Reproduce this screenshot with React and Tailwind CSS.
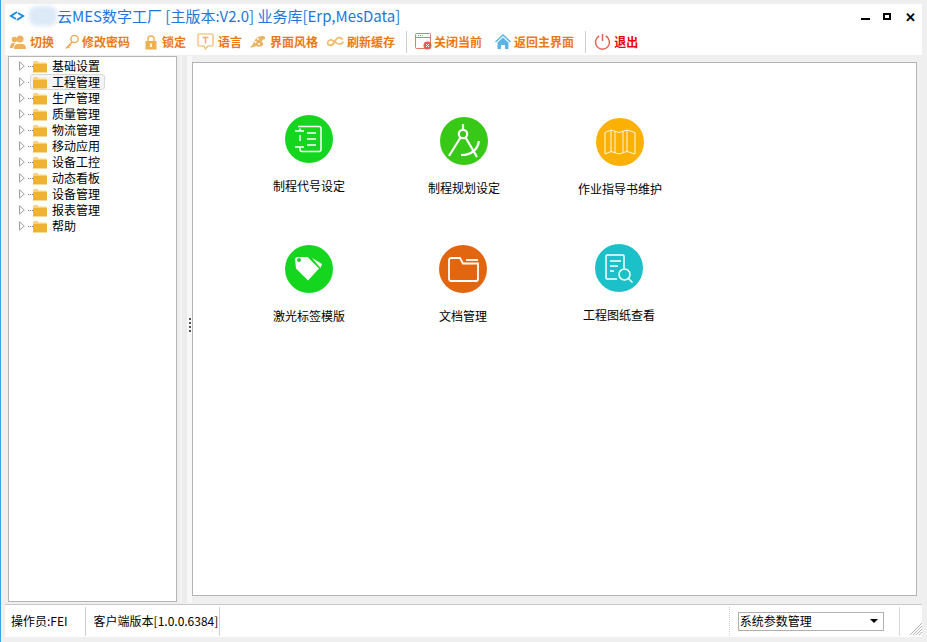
import { ChevronDown } from "lucide-react";

const CJK = "font-['Noto_Sans_CJK_SC','Liberation_Sans',sans-serif]";

const treeItems = ["基础设置", "工程管理", "生产管理", "质量管理", "物流管理", "移动应用", "设备工控", "动态看板", "设备管理", "报表管理", "帮助"];

function UserIcon() {
  return (
    <svg width="16" height="16" viewBox="0 0 16 16" fill="#f0b060">
      <circle cx="10" cy="5" r="3.5" />
      <path d="M4 15c0-4 2-5 4-5h4c2 0 4 1 4 5z" />
      <circle cx="4.5" cy="5.5" r="2.8" />
      <path d="M0 14c0-3 1-5 3-5h2l-2 5z" />
    </svg>
  );
}

function KeyIcon() {
  return (
    <svg width="16" height="16" viewBox="0 0 16 16" fill="none" stroke="#f0a850" strokeWidth="1.4">
      <circle cx="10.5" cy="5" r="3.6" />
      <path d="M8 8 2 14.5M3.5 12.5l2 1.5M5.5 10.5l1.5 1.5" />
    </svg>
  );
}

function LockIcon() {
  return (
    <svg width="14" height="16" viewBox="0 0 14 16">
      <path d="M4 8V5a3 3 0 0 1 6 0v3" fill="none" stroke="#f0b060" strokeWidth="1.5" />
      <rect x="1.5" y="7" width="11" height="8.5" fill="#f0b050" />
      <rect x="6" y="9.5" width="2" height="3.5" fill="#fff" />
    </svg>
  );
}

function LangIcon() {
  return (
    <svg width="17" height="17" viewBox="0 0 17 17" fill="none" stroke="#f0b060" strokeWidth="1.1">
      <path d="M2 1h13a1 1 0 0 1 1 1v10a1 1 0 0 1-1 1h-4l-2.5 3L7 13H2a1 1 0 0 1-1-1V2a1 1 0 0 1 1-1z" />
      <path d="M5.5 4.500h6M8.500 4.500v6" strokeWidth="1.500" />
    </svg>
  );
}

function SkinIcon() {
  return (
    <svg width="17" height="16" viewBox="0 0 17 16" fill="#e8b468">
      <path d="M1 13c2-1 3-3 4-5 1-3 4-6 8-6 2 0 4 1 3 3-1 1-3 0-3 2s2 2 1 4c-1 2-5 2-7 1-2 1-4 2-6 1z" />
      <circle cx="9" cy="5" r="1" fill="#fff" />
      <circle cx="6.500" cy="8" r="1" fill="#fff" />
      <circle cx="10" cy="10" r="1" fill="#fff" />
    </svg>
  );
}

function RefreshIcon() {
  return (
    <svg width="17" height="12" viewBox="0 0 17 12" fill="none" stroke="#eebb70" strokeWidth="1.700">
      <path d="M16 3.500C13 .5 10 1 8 5c-1.500 3-4 5-6 4S0 5 3 4c3-1 6 4 9 4 2 0 4-1 4-2.500" />
    </svg>
  );
}

function CloseTabIcon() {
  return (
    <svg width="17" height="17" viewBox="0 0 17 17">
      <rect x=".5" y=".5" width="15" height="15" rx="1" fill="#fff" stroke="#de7a66" />
      <path d="M1 1h14v3H1z" fill="#fff" />
      <path d="M1 4.500h14" stroke="#de7a66" />
      <path d="M3 2.500h1M5 2.500h1M7 2.500h1" stroke="#de7a66" />
      <circle cx="12.500" cy="12.500" r="4" fill="#e2604c" />
      <path d="m11 11 3 3m0-3-3 3" stroke="#fff" />
    </svg>
  );
}

function HomeIcon() {
  return (
    <svg width="16" height="15" viewBox="0 0 16 15" fill="#5cb3e6">
      <path d="M8 0 0 7.500l1 1L8 2l7 6.500 1-1z" />
      <path d="M2.500 8.500 8 3.500l5.500 5V15H10v-4H6v4H2.500z" />
    </svg>
  );
}

function PowerIcon() {
  return (
    <svg width="17" height="17" viewBox="0 0 17 17" fill="none" stroke="#df6350" strokeWidth="1.500">
      <path d="M5.200 3a7 7 0 1 0 6.600 0" />
      <path d="M8.500 1v7" />
    </svg>
  );
}

function Folder() {
  return (
    <svg width="14" height="13" viewBox="0 0 14 13" className="shrink-0">
      <path d="M0 2.500 1 1h3.500l1 1.500H13l1 1V5H0z" fill="#f7d17d" />
      <path d="M0 4h14v8.500H0z" fill="#f0b232" />
    </svg>
  );
}

function Triangle() {
  return (
    <svg width="6" height="10" viewBox="0 0 6 10" className="shrink-0">
      <path d="M.5.800 5.300 5 .5 9.200z" fill="#fff" stroke="#a0a0a0" />
    </svg>
  );
}

const toolbar = [
  { icon: <UserIcon />, label: "切换", cls: "ml-[1px] mr-[10px]" },
  { icon: <KeyIcon />, label: "修改密码", cls: "mr-[14px]", gap: "gap-[2px]" },
  { icon: <LockIcon />, label: "锁定", cls: "mr-[11px]" },
  { icon: <LangIcon />, label: "语言", cls: "mr-[7px]" },
  { icon: <SkinIcon />, label: "界面风格", cls: "mr-[9px]" },
  { icon: <RefreshIcon />, label: "刷新缓存", cls: "", gap: "gap-[3px]" },
];

const modules = [
  { label: "制程代号设定", color: "bg-[#14d61e]", icon: "note", cls: "mt-[52px] ml-[66px]" },
  { label: "制程规划设定", color: "bg-[#38c818]", icon: "compass", cls: "mt-[54px] ml-[66px]" },
  { label: "作业指导书维护", color: "bg-[#fab104]", icon: "map", cls: "mt-[55px] ml-[65px]" },
  { label: "激光标签模版", color: "bg-[#14d61e]", icon: "tag", cls: "mt-[47px] ml-[66px]" },
  { label: "文档管理", color: "bg-[#e2650f]", icon: "folder", cls: "mt-[47px] ml-[65px]" },
  { label: "工程图纸查看", color: "bg-[#1cc0c8]", icon: "search", cls: "mt-[46px] ml-[64px]" },
];

function ModuleGlyph({ name }) {
  const s = { fill: "none", stroke: "#fff", strokeWidth: 1.5 };
  if (name === "note") {
    return (
      <svg width="30" height="30" viewBox="0 0 30 30" {...s}>
        <path d="M4 3.500h21a2 2 0 0 1 2 2v21a2 2 0 0 1-2 2H8a2 2 0 0 1-2-2V24M6 18v-6M6 8V5.500M1 8h9M1 24h9M13 10h9M13 16h9M13 22h9" transform="translate(0 -1)" />
      </svg>
    );
  }
  if (name === "compass") {
    return (
      <svg width="34" height="36" viewBox="0 0 34 36" {...s} strokeWidth="2.200">
        <circle cx="16" cy="11" r="4.200" />
        <path d="M16 1v6M13.500 14.500 2 33M18.500 14.500 30 34" />
        <path d="M14 32c8 0 16-3 18-14" />
      </svg>
    );
  }
  if (name === "map") {
    return (
      <svg width="32" height="26" viewBox="0 0 32 26" {...s} strokeWidth="0.900">
        <path d="M1 3.500 7 1l8 2.500L23 1l8 2.500V25l-8-2.500L15 25l-8-2.500L1 25z" />
        <path d="M7 1v21.500M11 2.200v21.500M19 2.200v21.500M23 1v21.500" />
      </svg>
    );
  }
  if (name === "tag") {
    return (
      <svg width="28" height="28" viewBox="0 0 28 28">
        <path d="M0 2.500 2 1h10.500L24 12.500 13 24.500 1 12.500z" fill="#fff" transform="translate(0 1)" />
        <circle cx="4" cy="5" r="2" fill="#14d61e" />
        <path d="m17 3 10 6-1.500 4z" fill="#fff" />
      </svg>
    );
  }
  if (name === "folder") {
    return (
      <svg width="31" height="25" viewBox="0 0 31 25" {...s} strokeWidth="1.800">
        <path d="M1 3a2 2 0 0 1 2-2h9l3 5.500h15V22a2 2 0 0 1-2 2H3a2 2 0 0 1-2-2z" />
        <path d="M18 3h12" />
      </svg>
    );
  }
  return (
    <svg width="28" height="29" viewBox="0 0 28 29" {...s}>
      <path d="M19 14V2a1 1 0 0 0-1-1H2a1 1 0 0 0-1 1v22a1 1 0 0 0 1 1h10" />
      <path d="M5 7h11M5 12h8M5 17h4" />
      <circle cx="19.500" cy="20.500" r="5.500" />
      <path d="m23.500 24.500 4 4" />
    </svg>
  );
}

function Module({ item }) {
  return (
    <div className={`${item.cls} flex w-[100px] flex-col items-center`}>
      <div className={`${item.color} flex h-12 w-12 items-center justify-center rounded-full`}>
        <ModuleGlyph name={item.icon} />
      </div>
      <div className="mt-[14px] text-center text-[12px] leading-[18px] whitespace-nowrap text-black">{item.label}</div>
    </div>
  );
}

export default function App() {
  return (
    <div className={`${CJK} flex h-[642px] w-[927px] flex-col overflow-hidden border-l border-[#35a4e8] bg-[#efefef] pt-[4px] pr-[5px] pl-[4px] text-black`}>
      {/* title bar */}
      <div className="flex h-[24px] shrink-0 items-center bg-white">
        <svg width="16" height="14" viewBox="0 0 16 14" fill="none" strokeWidth="2" className="ml-[4px] shrink-0">
          <path d="M8 3 2 7l5 3" stroke="#1a8fe0" />
          <path d="M8 11l6-4-5-3" stroke="#1a8fe0" />
        </svg>
        <div className="ml-[4px] h-[20px] w-[28px] shrink-0 rounded-[8px] bg-[#dce9f7] blur-[2px]" />
        <div className="text-[15px] leading-[22px] whitespace-nowrap text-[#1a78de]">云MES数字工厂 [主版本:V2.0] 业务库[Erp,MesData]</div>
        <div className="ml-auto flex items-center">
          <div className="mt-[5px] h-[2px] w-[9px] bg-black" />
          <div className="ml-[13px] h-[7px] w-[8px] border-2 border-black" />
          <div className="mr-[6px] ml-[14px] text-[13px] leading-none font-bold text-black">✕</div>
        </div>
      </div>

      {/* toolbar */}
      <div className="flex h-[27px] shrink-0 items-center bg-white pl-[4px] text-[12px] font-bold text-[#ec7a10]">
        {toolbar.map((t) => (
          <div key={t.label} className={`flex items-center ${t.gap || "gap-[4px]"} ${t.cls}`}>
            {t.icon}
            <span className="whitespace-nowrap">{t.label}</span>
          </div>
        ))}
        <div className="mx-[8px] ml-[11px] h-[22px] w-px bg-[#cfcfcf]" />
        <div className="flex items-center gap-[2px]">
          <CloseTabIcon />
          <span>关闭当前</span>
        </div>
        <div className="ml-[13px] flex items-center gap-[3px]">
          <HomeIcon />
          <span>返回主界面</span>
        </div>
        <div className="mx-[8px] ml-[11px] h-[22px] w-px bg-[#cfcfcf]" />
        <div className="flex items-center gap-[3px] text-[#f00000]">
          <PowerIcon />
          <span>退出</span>
        </div>
      </div>

      {/* main */}
      <div className="flex min-h-0 flex-1 bg-[#efefef] pt-px">
        <div className="ml-[3px] h-[546px] w-[169px] shrink-0 border border-[#b4b4b4] bg-white pt-px">
          {treeItems.map((name, i) => (
            <div key={name} className="relative flex h-4 items-center pl-[10px]">
              {i === 1 && <div className="absolute top-0 left-[21px] h-4 w-[75px] rounded-[3px] border border-[#d8d8d8] bg-[#f4f4f4]" />}
              <Triangle />
              <div className="ml-[3px] w-[5px] shrink-0 border-t border-dotted border-[#808080]" />
              <div className="relative flex items-center">
                <Folder />
                <span className="ml-[5px] text-[12px] leading-4 text-black">{name}</span>
              </div>
            </div>
          ))}
        </div>
        <div className="relative w-[5px] shrink-0">
          <div className="absolute top-0 left-[3px] h-[547px] w-[2px] bg-[#f4f4f4]" />
        </div>
        <div className="flex h-[547px] w-[5px] shrink-0 flex-col items-center justify-center gap-[2px] bg-[#ececec]" />
        <div className="relative flex h-[547px] w-[5px] shrink-0 flex-col items-center justify-center gap-[2px] bg-[#f8f8f8] pb-[10px]">
          <div className="h-[2px] w-[2px] bg-[#555]" />
          <div className="h-[2px] w-[2px] bg-[#555]" />
          <div className="h-[2px] w-[2px] bg-[#555]" />
          <div className="h-[2px] w-[2px] bg-[#555]" />
        </div>
        <div className="h-[547px] flex-1 bg-[#efefef] pt-[6px] pr-[5px] pb-[7px]">
          <div className="grid h-full grid-cols-[155px_157px_1fr] content-start border border-[#b4b4b4] bg-white">
            {modules.map((m) => (
              <Module key={m.label} item={m} />
            ))}
          </div>
        </div>
      </div>

      {/* status bar */}
      <div className="mb-[5px] flex h-[33px] shrink-0 items-center border-t border-[#c8c8c8] bg-white text-[12px] leading-4">
        <div className="flex h-[29px] w-[81px] items-center border-r border-[#d0d0d0] pl-[6px] whitespace-nowrap">操作员:FEI</div>
        <div className="flex h-[29px] w-[135px] items-center border-r border-[#d0d0d0] pl-[8px] whitespace-nowrap">客户端版本[1.0.0.6384]</div>
        <div className="ml-[509px] h-[29px] w-0 border-l border-dotted border-[#d0d0d0]" />
        <div className="ml-[8px] flex h-[19px] w-[147px] items-center justify-between border border-[#b0b0b0] bg-white pr-[5px] pl-px">
          <span>系统参数管理</span>
          <svg width="8" height="4" viewBox="0 0 8 4">
            <path d="M0 0h8L4 4z" fill="#000" />
          </svg>
        </div>
        <div className="ml-[15px] h-[29px] w-px bg-[#d8d8d8]" />
        <svg width="12" height="12" viewBox="0 0 12 12" stroke="#b0b0b0" className="mt-auto mb-[2px] ml-[10px]">
          <path d="M12 0 0 12M12 3 3 12M12 6l-6 6M12 9l-3 3" />
        </svg>
      </div>
      <div className="sr-only">
        <ChevronDown />
      </div>
    </div>
  );
}
